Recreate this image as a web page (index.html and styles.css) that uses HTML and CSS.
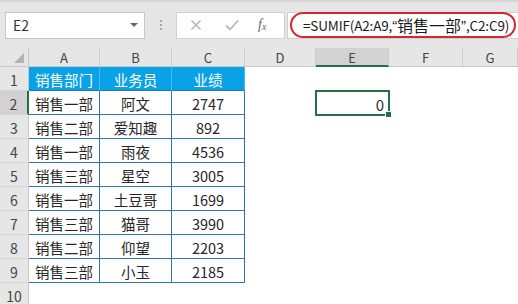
FILE: index.html
```html
<!DOCTYPE html>
<html lang="zh-CN">
<head>
<meta charset="UTF-8" />
<title>销售业绩</title>
<link rel="stylesheet" href="styles.css">
</head>
<body>
  <div class="toolbar">
    <div class="namebox">
      <span>E2</span>
      <span class="caret"></span>
    </div>
    <div class="grip"><i></i><i></i><i></i></div>
    <div class="fbtns">
      <svg width="12" height="12" viewBox="0 0 12 12"><path d="M1.5 1.5 L10.5 10.5 M10.5 1.5 L1.5 10.5" stroke="#b8b8b8" stroke-width="1.6" fill="none"/></svg>
      <svg width="14" height="12" viewBox="0 0 14 12"><path d="M1 6.5 L5 10.5 L13 1.5" stroke="#b8b8b8" stroke-width="1.8" fill="none"/></svg>
      <span class="fx">f<sub>x</sub></span>
    </div>
    <div class="formula">
      <span class="expr">=SUMIF(A2:A9,<span class="q">“</span><span class="zh">销售一部</span><span class="q">”</span>,C2:C9)</span>
    </div>
  </div>

  <div class="sheet">
    <div class="corner"></div>
    <div class="colhead">A</div>
    <div class="colhead">B</div>
    <div class="colhead">C</div>
    <div class="colhead">D</div>
    <div class="colhead sel">E</div>
    <div class="colhead">F</div>
    <div class="colhead">G</div>

    <div class="rowhead">1</div>
    <div class="cell th">销售部门</div>
    <div class="cell th">业务员</div>
    <div class="cell th">业绩</div>
    <div></div><div></div><div></div><div></div>

    <div class="rowhead sel">2</div>
    <div class="cell">销售一部</div>
    <div class="cell">阿文</div>
    <div class="cell">2747</div>
    <div></div>
    <div class="active">0<span class="handle"></span></div>
    <div></div><div></div>

    <div class="rowhead">3</div>
    <div class="cell">销售二部</div>
    <div class="cell">爱知趣</div>
    <div class="cell">892</div>
    <div></div><div></div><div></div><div></div>

    <div class="rowhead">4</div>
    <div class="cell">销售一部</div>
    <div class="cell">雨夜</div>
    <div class="cell">4536</div>
    <div></div><div></div><div></div><div></div>

    <div class="rowhead">5</div>
    <div class="cell">销售三部</div>
    <div class="cell">星空</div>
    <div class="cell">3005</div>
    <div></div><div></div><div></div><div></div>

    <div class="rowhead">6</div>
    <div class="cell">销售一部</div>
    <div class="cell">土豆哥</div>
    <div class="cell">1699</div>
    <div></div><div></div><div></div><div></div>

    <div class="rowhead">7</div>
    <div class="cell">销售三部</div>
    <div class="cell">猫哥</div>
    <div class="cell">3990</div>
    <div></div><div></div><div></div><div></div>

    <div class="rowhead">8</div>
    <div class="cell">销售二部</div>
    <div class="cell">仰望</div>
    <div class="cell">2203</div>
    <div></div><div></div><div></div><div></div>

    <div class="rowhead">9</div>
    <div class="cell">销售三部</div>
    <div class="cell">小玉</div>
    <div class="cell">2185</div>
    <div></div><div></div><div></div><div></div>

    <div class="rowhead">10</div>
  </div>
</body>
</html>
```

FILE: styles.css
```css
body {
  margin: 0;
  font-family: "Noto Sans CJK SC", "Liberation Sans", sans-serif;
  color: #262626;
  background: #fff;
  overflow: hidden;
}

/* name box + formula bar */
.toolbar {
  display: flex;
  align-items: center;
  height: 48px;
  padding-left: 5px;
  background: #e6e6e6;
  border-top: 2px solid #d6d6d6;
  box-sizing: border-box;
}
.namebox {
  flex: none;
  width: 140px;
  height: 27px;
  box-sizing: border-box;
  background: #fff;
  border: 1px solid #c6c6c6;
  display: flex;
  align-items: center;
  justify-content: space-between;
  padding: 0 6px 0 7px;
  font-size: 14px;
  color: #333;
}
.caret {
  width: 0;
  height: 0;
  border-left: 4px solid transparent;
  border-right: 4px solid transparent;
  border-top: 4px solid #666;
}
.grip {
  flex: none;
  width: 31px;
  display: flex;
  flex-direction: column;
  align-items: center;
  gap: 2px;
}
.grip i {
  width: 2px;
  height: 2px;
  background: #a8a8a8;
}
.fbtns {
  flex: none;
  width: 109px;
  height: 27px;
  box-sizing: border-box;
  background: #fff;
  border: 1px solid #d0d0d0;
  display: flex;
  align-items: center;
  padding-left: 13px;
  gap: 23px;
}
.fx {
  font-family: "Liberation Serif", serif;
  font-style: italic;
  font-size: 14px;
  color: #666;
  margin-left: -4px;
}
.fx sub {
  font-size: 10px;
  vertical-align: -1px;
}
.formula {
  flex: 1;
  min-width: 0;
  height: 27px;
  margin-left: 2px;
  box-sizing: border-box;
  background: #fff;
  border: 1px solid #d0d0d0;
  border-right: none;
  display: flex;
  align-items: center;
  padding-left: 2px;
}
.expr {
  flex: none;
  border: 2px solid #d8262e;
  border-radius: 13px;
  height: 26px;
  box-sizing: border-box;
  padding: 0 5px 0 11px;
  display: flex;
  align-items: center;
  font-size: 13.5px;
  letter-spacing: -0.15px;
  color: #1a1a1a;
  white-space: nowrap;
}
.expr .q {
  font-family: "Liberation Sans", sans-serif;
  font-size: 15px;
}
.expr .zh {
  font-size: 16px;
  letter-spacing: 0;
}

/* worksheet grid */
.sheet {
  display: grid;
  grid-template-columns: 29px 71px 72px 73px 71px 73px 74px 1fr;
  grid-template-rows: 19px repeat(10, 24px);
}
.corner {
  background: #e6e6e6;
  border-right: 1px solid #c8c8c8;
  border-bottom: 1px solid #c8c8c8;
  box-sizing: border-box;
  position: relative;
}
.corner::after {
  content: "";
  position: absolute;
  right: 4px;
  bottom: 3px;
  border-left: 10px solid transparent;
  border-bottom: 10px solid #b4b4b4;
}
.colhead {
  background: #e6e6e6;
  border-right: 1px solid #cdcdcd;
  border-bottom: 1px solid #c8c8c8;
  box-sizing: border-box;
  text-align: center;
  font-size: 13px;
  line-height: 20px;
  color: #444;
}
.colhead.sel {
  background: #d2d2d2;
  border-bottom: 2px solid #217346;
}
.rowhead {
  background: #e6e6e6;
  border-right: 1px solid #c8c8c8;
  border-bottom: 1px solid #d4d4d4;
  box-sizing: border-box;
  text-align: center;
  font-size: 14px;
  line-height: 26px;
  color: #444;
}
.rowhead.sel {
  background: #d2d2d2;
  border-right: 2px solid #217346;
}
.cell {
  border-right: 1px solid #2e75b6;
  border-bottom: 1px solid #2e75b6;
  box-sizing: border-box;
  display: flex;
  align-items: center;
  justify-content: center;
  padding-top: 2px;
  font-size: 14.5px;
}
.cell.th {
  background: #0aa2e6;
  color: #fff;
  border-right-color: #4fb9ea;
  border-bottom-color: #2e75b6;
}
.active {
  position: relative;
  outline: 2px solid #217346;
  outline-offset: -1px;
  text-align: right;
  padding: 2px 5px 0 0;
  font-size: 15px;
  line-height: 24px;
  color: #333;
}
.handle {
  position: absolute;
  right: -3px;
  bottom: -3px;
  width: 5px;
  height: 5px;
  background: #217346;
  border: 1px solid #fff;
}
```
